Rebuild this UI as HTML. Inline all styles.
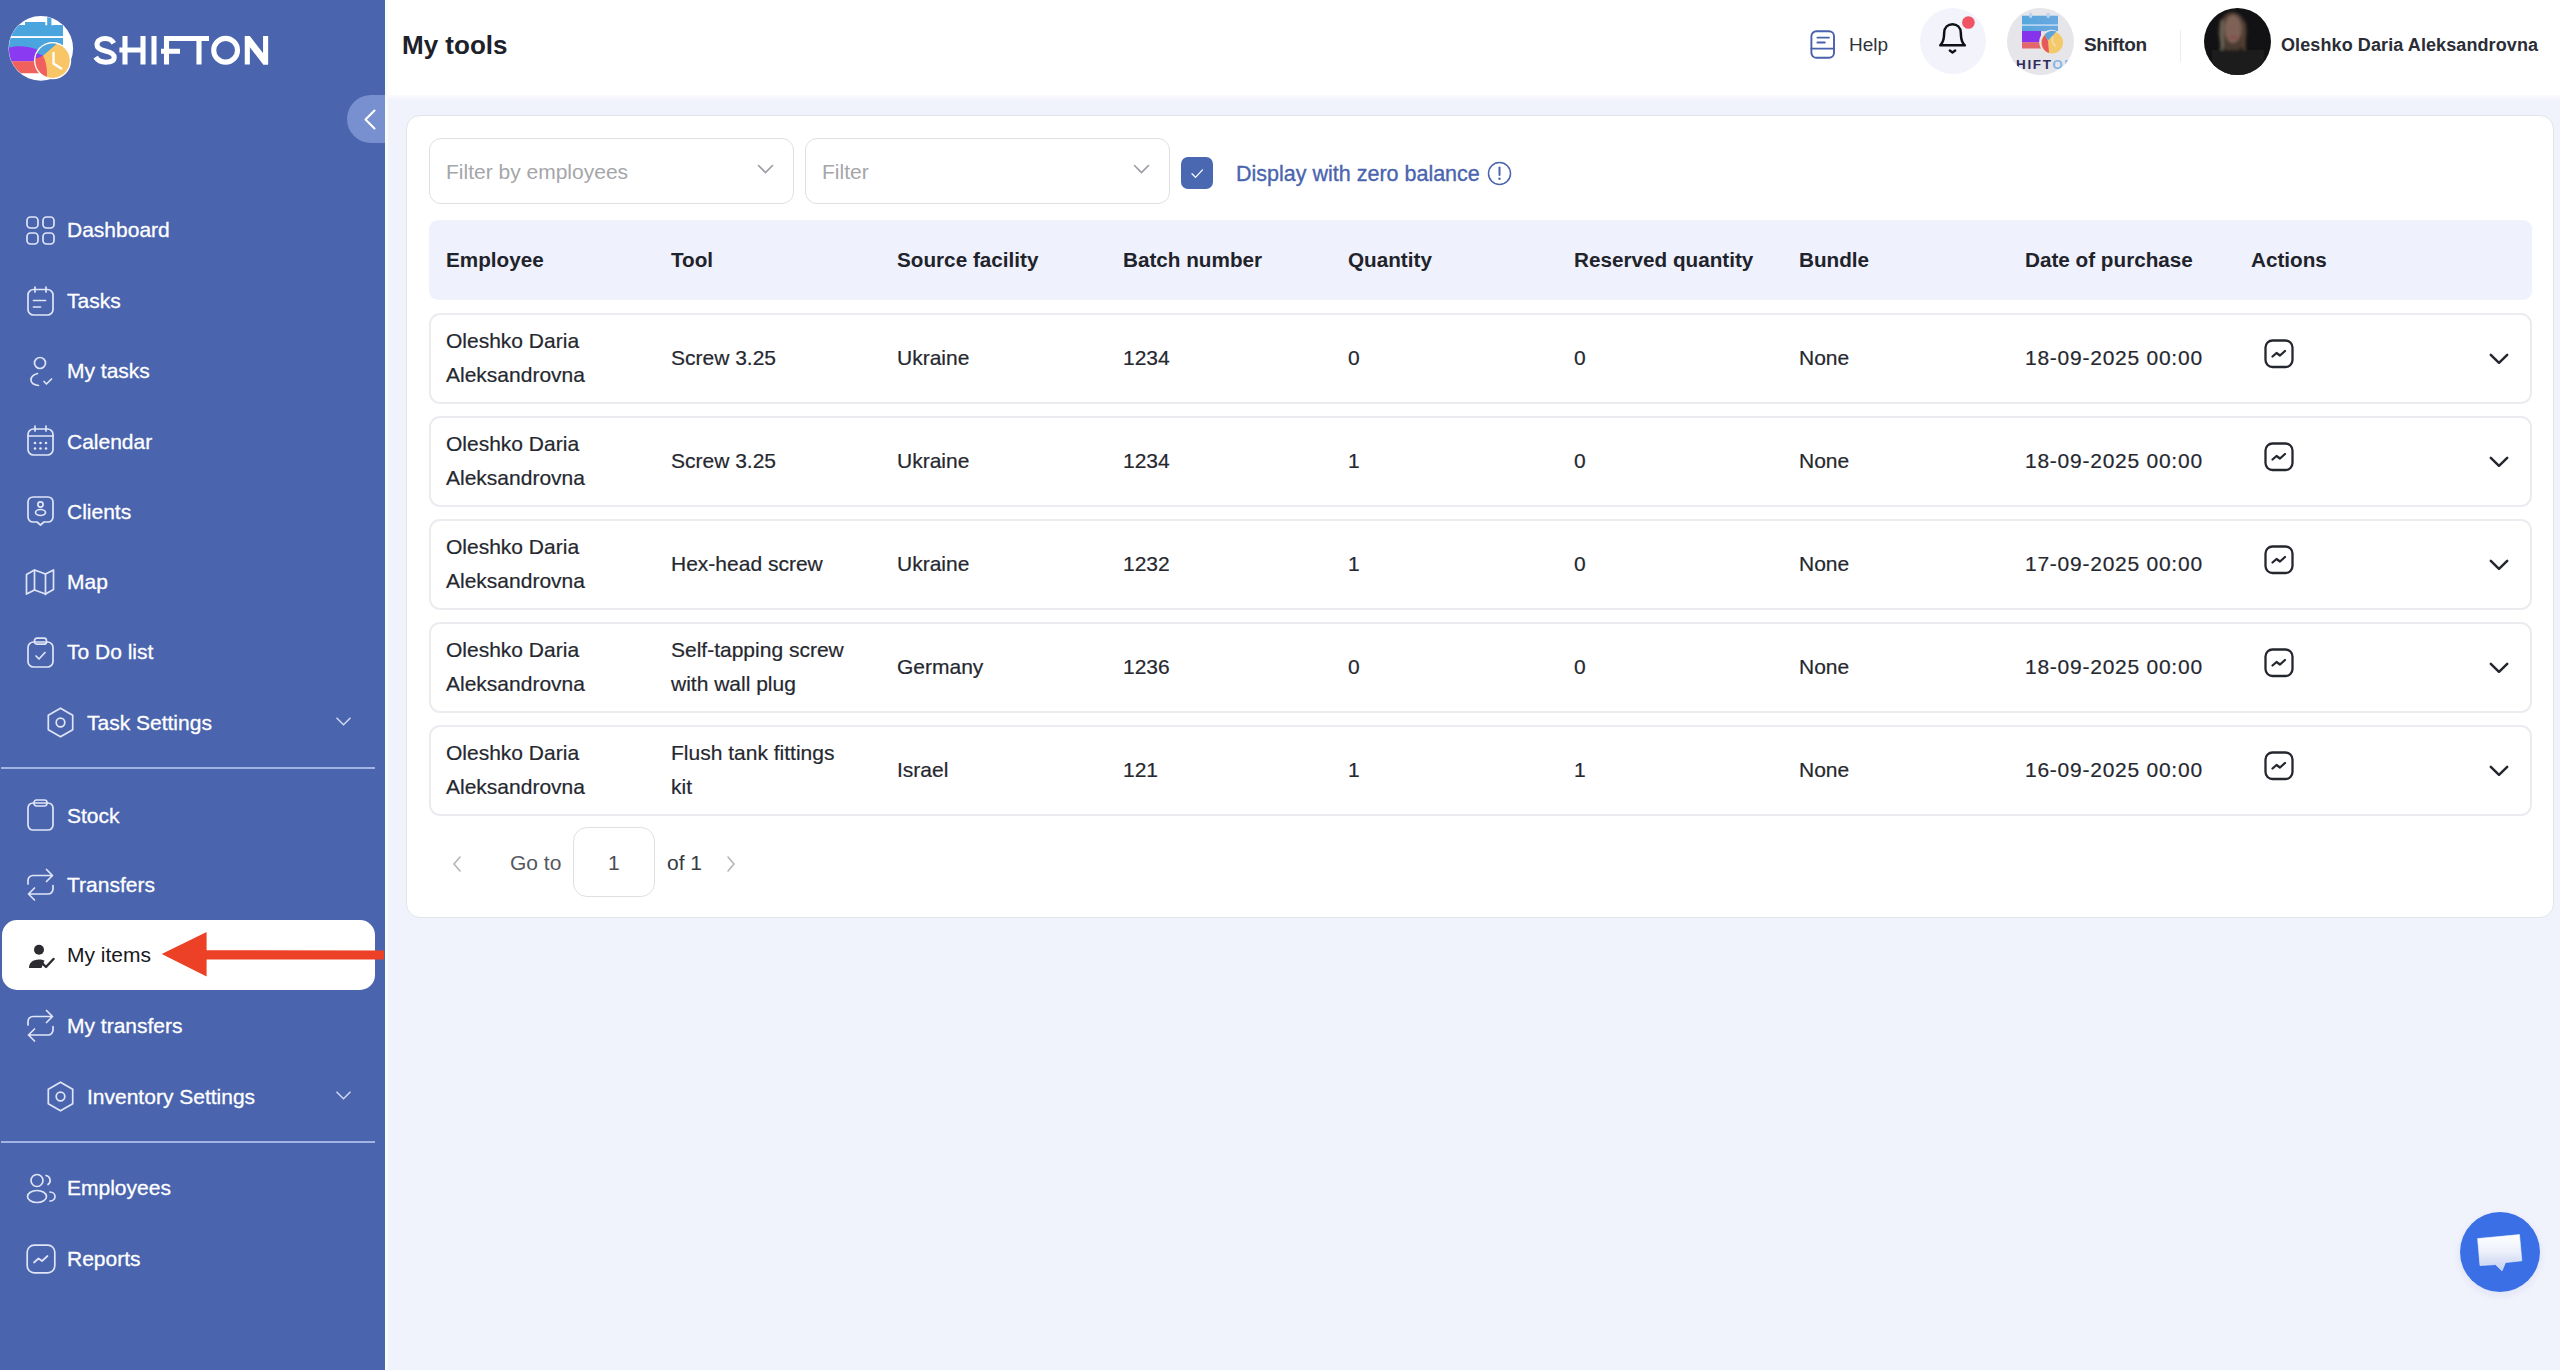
<!DOCTYPE html>
<html><head><meta charset="utf-8">
<style>
*{box-sizing:border-box;margin:0;padding:0}
html,body{width:2560px;height:1370px;overflow:hidden;background:#f0f2fc;font-family:"Liberation Sans",sans-serif;color:#24272e}
.abs{position:absolute}
.t{position:absolute;white-space:nowrap;line-height:1}
#side{position:absolute;left:0;top:0;width:385px;height:1370px;background:#4a64ae}
#hdr{position:absolute;left:385px;top:0;width:2175px;height:95px;background:#fff}
.nv{color:#fff;font-size:21px;-webkit-text-stroke:0.3px #fff}
.divl{position:absolute;left:1px;width:374px;height:2px;background:#a3b3e3}
#card{position:absolute;left:406px;top:115px;width:2148px;height:803px;background:#fff;border:1.5px solid #e3e4ea;border-radius:14px}
.sel{position:absolute;top:138px;width:365px;height:66px;border:1.5px solid #dfe0e4;border-radius:12px;background:#fff}
.ph{font-size:21px;color:#a5a6a9}
.thb{position:absolute;left:429px;top:220px;width:2103px;height:80px;background:#eff1fc;border-radius:9px}
.th{font-weight:bold;font-size:20.7px;color:#1f232b}
.row{position:absolute;left:429px;width:2103px;height:91px;border:2px solid #ebecf0;border-radius:11px;background:#fff}
.td{font-size:21px;color:#25282f;-webkit-text-stroke:0.2px #25282f}
</style></head><body>

<div id="side">
<svg class="abs" style="left:5px;top:12px" width="75" height="75" viewBox="0 0 75 75">
<defs><clipPath id="lc"><circle cx="35.8" cy="36.4" r="32"/></clipPath>
<clipPath id="cc"><circle cx="47.6" cy="48.7" r="17.2"/></clipPath></defs>
<circle cx="35.8" cy="36.4" r="32.3" fill="#fff"/>
<g clip-path="url(#lc)">
<path d="M0 13H20V10H40.3V13.3H42.2V5H46.4V13.3H48.3V13H58V40H0z" fill="#4aa4de"/>
<rect x="0" y="24.1" width="58" height="1.9" fill="#fff"/>
<path d="M0 37C8 33.5 22 33 34 38.5V49.5H0z" fill="#8a3bf1"/>
<path d="M0 49.3H34V61.3H0z" fill="#f0615e"/>
</g>
<circle cx="47.6" cy="48.7" r="18.6" fill="#fff"/>
<g clip-path="url(#cc)">
<rect x="28" y="30" width="40" height="40" fill="#f8c567"/>
<path d="M28 28H56L38 43.8L28 45z" fill="#4aa4de"/>
<path d="M28 41L38 43.8C41.5 50 42.5 58 41.6 67H28z" fill="#f0605f"/>
<path d="M28 39.5L33 41.5L38 43.8L31 46.5L28 46z" fill="#8a3bf1"/>
</g>
<path d="M48.5 40V51.5L57 57" stroke="#fff" stroke-width="2.3" fill="none"/>
</svg>
<svg class="abs" style="left:85px;top:25px" width="200" height="50" viewBox="85 25 200 50"><g stroke="#fff" stroke-width="5.1" fill="none" stroke-linecap="butt" stroke-linejoin="miter">
<path d="M113.8 43.2C112 40 108.8 38.5 105.2 38.5C100.2 38.5 97 41.2 97 44.8C97 48.8 100.6 50 105.4 51C110.4 52.1 114.2 53.8 114.2 57.6C114.2 61.2 110.6 62.2 105.6 62.2C101.4 62.2 97.8 60.6 95.6 57.2"/>
<path d="M125 36V64.5M143 36V64.5M119.4 50H143"/>
<path d="M154 36V64.5"/>
<path d="M166.5 64.5V38.5H209M161 51.2H180M199 38.5V64.5"/>
<circle cx="225.6" cy="50.25" r="11.9"/>
<path d="M247.3 64.5V36M265.6 64.5V36"/><path d="M245 36H249.8L268 59.6V64.5H263.2L245 40.9z" fill="#fff" stroke="none"/>
</g></svg>
<div class="abs" style="left:347px;top:95px;width:38px;height:48px;border-radius:24px 0 0 24px;background:#7890cf"></div>
<svg class="abs" style="left:362px;top:107px" width="16" height="24" viewBox="0 0 16 24" ><path d="M12.5 3.5L3.5 12.5l9 9" stroke="#fff" stroke-width="2.1" fill="none" stroke-linecap="round" stroke-linejoin="round"/></svg>
<svg class="abs" style="left:26px;top:216px" width="29" height="29" viewBox="0 0 29 29" ><g stroke="#dfe5f7" stroke-width="1.7" fill="none" stroke-linecap="round" stroke-linejoin="round"><rect x="1" y="1" width="11" height="11" rx="3.5"/><rect x="17" y="1" width="11" height="11" rx="3.5"/><rect x="1" y="17" width="11" height="11" rx="3.5"/><rect x="17" y="17" width="11" height="11" rx="3.5"/></g></svg>
<div class="t nv" style="left:67px;top:219px">Dashboard</div>
<svg class="abs" style="left:27px;top:286px" width="27" height="30" viewBox="0 0 27 30" ><g stroke="#dfe5f7" stroke-width="1.7" fill="none" stroke-linecap="round" stroke-linejoin="round"><rect x="1" y="3.5" width="25" height="25.5" rx="5.5"/><path d="M8 1v5M19 1v5M6.5 14.5h12M6.5 21h7"/></g></svg>
<div class="t nv" style="left:67px;top:290px">Tasks</div>
<svg class="abs" style="left:29px;top:356px" width="24" height="31" viewBox="0 0 24 31" ><g stroke="#dfe5f7" stroke-width="1.7" fill="none" stroke-linecap="round" stroke-linejoin="round"><circle cx="11" cy="7" r="5.5"/><path d="M8.5 17.5C4.5 18.5 2 21 2 24c0 3 3 5 7.5 5.5"/><path d="M15 25.5l2.5 2.5 5-5"/></g></svg>
<div class="t nv" style="left:67px;top:360px">My tasks</div>
<svg class="abs" style="left:27px;top:425px" width="27" height="31" viewBox="0 0 27 31" ><g stroke="#dfe5f7" stroke-width="1.7" fill="none" stroke-linecap="round" stroke-linejoin="round"><rect x="1" y="4" width="25" height="26" rx="5.5"/><path d="M1 11h25M8 1v5M19 1v5"/></g><g fill="#dfe5f7"><circle cx="8" cy="18" r="1.3"/><circle cx="13.5" cy="18" r="1.3"/><circle cx="19" cy="18" r="1.3"/><circle cx="8" cy="23.5" r="1.3"/><circle cx="13.5" cy="23.5" r="1.3"/><circle cx="19" cy="23.5" r="1.3"/></g></svg>
<div class="t nv" style="left:67px;top:431px">Calendar</div>
<svg class="abs" style="left:27px;top:496px" width="27" height="30" viewBox="0 0 27 30" ><g stroke="#dfe5f7" stroke-width="1.7" fill="none" stroke-linecap="round" stroke-linejoin="round"><path d="M6 1h15a5 5 0 0 1 5 5v15a5 5 0 0 1-5 5h-4l-3.5 3-3.5-3H6a5 5 0 0 1-5-5V6a5 5 0 0 1 5-5z"/><circle cx="13.5" cy="8.5" r="2.6"/><ellipse cx="13.5" cy="16.5" rx="5" ry="3"/></g></svg>
<div class="t nv" style="left:67px;top:501px">Clients</div>
<svg class="abs" style="left:25px;top:568px" width="30" height="28" viewBox="0 0 30 28" ><g stroke="#dfe5f7" stroke-width="1.7" fill="none" stroke-linecap="round" stroke-linejoin="round"><path d="M1.5 6.5l8-4.5 11 4 8-4v19.5l-8 4.5-11-4-8 4z"/><path d="M9.5 2v20M20.5 6v20.5"/></g></svg>
<div class="t nv" style="left:67px;top:571px">Map</div>
<svg class="abs" style="left:27px;top:637px" width="27" height="31" viewBox="0 0 27 31" ><g stroke="#dfe5f7" stroke-width="1.7" fill="none" stroke-linecap="round" stroke-linejoin="round"><rect x="1" y="5" width="25" height="25" rx="5.5"/><rect x="7.5" y="1.2" width="12" height="6" rx="2.5"/><path d="M9 19l3 3 6-6.5"/></g></svg>
<div class="t nv" style="left:67px;top:641px">To Do list</div>
<svg class="abs" style="left:27px;top:799px" width="27" height="32" viewBox="0 0 27 32" ><g stroke="#dfe5f7" stroke-width="1.7" fill="none" stroke-linecap="round" stroke-linejoin="round"><rect x="1" y="4" width="25" height="27" rx="5"/><rect x="7" y="1" width="13" height="6" rx="2.5"/></g></svg>
<div class="t nv" style="left:67px;top:805px">Stock</div>
<svg class="abs" style="left:26px;top:868px" width="29" height="34" viewBox="0 0 29 34" ><g stroke="#dfe5f7" stroke-width="1.7" fill="none" stroke-linecap="round" stroke-linejoin="round"><path d="M2 16V12.5a5 5 0 0 1 5-5h19.5M20.5 1.5l6 6-6 6M27 17.5v3.5a5 5 0 0 1-5 5H2.5M8.5 32l-6-6 6-6"/></g></svg>
<div class="t nv" style="left:67px;top:874px">Transfers</div>
<svg class="abs" style="left:26px;top:1009px" width="29" height="34" viewBox="0 0 29 34" ><g stroke="#dfe5f7" stroke-width="1.7" fill="none" stroke-linecap="round" stroke-linejoin="round"><path d="M2 16V12.5a5 5 0 0 1 5-5h19.5M20.5 1.5l6 6-6 6M27 17.5v3.5a5 5 0 0 1-5 5H2.5M8.5 32l-6-6 6-6"/></g></svg>
<div class="t nv" style="left:67px;top:1015px">My transfers</div>
<svg class="abs" style="left:26px;top:1173px" width="30" height="31" viewBox="0 0 30 31" ><g stroke="#dfe5f7" stroke-width="1.7" fill="none" stroke-linecap="round" stroke-linejoin="round"><circle cx="11" cy="7.5" r="6"/><ellipse cx="11" cy="23.5" rx="9.5" ry="6"/><path d="M20 2.5a5 5 0 0 1 2 9M24 19a5 4.5 0 0 1 0 9"/></g></svg>
<div class="t nv" style="left:67px;top:1177px">Employees</div>
<svg class="abs" style="left:26px;top:1244px" width="30" height="30" viewBox="0 0 30 30" ><g stroke="#dfe5f7" stroke-width="1.7" fill="none" stroke-linecap="round" stroke-linejoin="round"><rect x="1.2" y="1.2" width="27.6" height="27.6" rx="7"/><path d="M8 18.5l4.5-4 3.5 2.5 5.5-5"/></g></svg>
<div class="t nv" style="left:67px;top:1248px">Reports</div>
<svg class="abs" style="left:46px;top:707px" width="29" height="31" viewBox="0 0 29 31" ><g stroke="#dfe5f7" stroke-width="1.7" fill="none" stroke-linecap="round" stroke-linejoin="round"><path d="M14.5 1.2l12.2 7v14.6l-12.2 7-12.2-7V8.2z"/><circle cx="14.5" cy="15.5" r="4.3"/></g></svg>
<div class="t nv" style="left:87px;top:712px">Task Settings</div>
<svg class="abs" style="left:336px;top:717px" width="15" height="9" viewBox="0 0 15 9" ><path d="M1 1.2l6.5 6.5 6.5-6.5" stroke="#cfd8f2" stroke-width="1.6" fill="none" stroke-linecap="round"/></svg>
<svg class="abs" style="left:46px;top:1081px" width="29" height="31" viewBox="0 0 29 31" ><g stroke="#dfe5f7" stroke-width="1.7" fill="none" stroke-linecap="round" stroke-linejoin="round"><path d="M14.5 1.2l12.2 7v14.6l-12.2 7-12.2-7V8.2z"/><circle cx="14.5" cy="15.5" r="4.3"/></g></svg>
<div class="t nv" style="left:87px;top:1086px">Inventory Settings</div>
<svg class="abs" style="left:336px;top:1091px" width="15" height="9" viewBox="0 0 15 9" ><path d="M1 1.2l6.5 6.5 6.5-6.5" stroke="#cfd8f2" stroke-width="1.6" fill="none" stroke-linecap="round"/></svg>
<div class="divl" style="top:767px"></div>
<div class="divl" style="top:1141px"></div>
<div class="abs" style="left:2px;top:920px;width:373px;height:70px;border-radius:15px;background:#fff"></div>
<svg class="abs" style="left:27px;top:944px" width="28" height="25" viewBox="0 0 28 25" ><circle cx="12" cy="5.8" r="5" fill="#2b2b30"/><path d="M2 24c0-5 3.5-8.5 10-8.5 2.2 0 4 .4 5.5 1.1L14.5 24z" fill="#2b2b30"/><path d="M15.5 19.5l3.5 3.5 7.5-8" stroke="#2b2b30" stroke-width="2.4" fill="none" stroke-linecap="round" stroke-linejoin="round"/></svg>
<div class="t" style="left:67px;top:944px;font-size:21px;color:#16181d">My items</div>
</div>
<svg class="abs" style="left:160px;top:930px" width="230" height="50" viewBox="0 0 230 50"><path d="M1.7 24L46.6 2v18.2L224 20.6v8.8L46.6 29.4V46.5z" fill="#ec4126"/></svg>
<div id="hdr"></div>
<div class="abs" style="left:385px;top:95px;width:2175px;height:6px;background:linear-gradient(#fbfbfe,#f0f2fc)"></div>
<div class="abs" style="left:385px;top:0;width:2.5px;height:1370px;background:#f9fcff"></div>
<div class="t" style="left:402px;top:32px;font-size:26px;font-weight:bold;color:#1d212a">My tools</div>
<svg class="abs" style="left:1809px;top:29px" width="28" height="31" viewBox="0 0 28 31" ><g stroke="#4a60ab" stroke-width="1.9" fill="none" stroke-linecap="round"><rect x="2.4" y="2.3" width="22.6" height="26.5" rx="5"/><path d="M2.4 19.6h22.6M8.4 8.6h11.6M8.4 13.5h7.4"/></g></svg>
<div class="t" style="left:1849px;top:35px;font-size:19px;color:#30333a">Help</div>
<svg class="abs" style="left:1915px;top:5px" width="75" height="75" viewBox="0 0 75 75">
<circle cx="38" cy="36" r="33" fill="#f2f3fb"/>
<path d="M25.2 40.3c2.6-2.6 3.6-5.5 3.8-9.5l.2-3.3c.3-5.3 3.8-8.3 8.3-8.3s8 3 8.3 8.3l.2 3.3c.2 4 1.2 6.9 3.8 9.5z" stroke="#101114" stroke-width="2.5" fill="none" stroke-linejoin="round"/>
<path d="M34.8 45.6l2.7 1.9 2.7-1.9" stroke="#101114" stroke-width="2.4" fill="none" stroke-linecap="round" stroke-linejoin="round"/>
<circle cx="53.4" cy="17.5" r="6.3" fill="#ef5364"/>
</svg>
<svg class="abs" style="left:2007px;top:8px" width="67" height="67" viewBox="0 0 67 67">
<defs><clipPath id="ac"><circle cx="33.5" cy="33.5" r="33.5"/></clipPath>
<linearGradient id="bg1" x1="0" y1="0" x2="1" y2="0"><stop offset="0" stop-color="#56a6dc"/><stop offset="1" stop-color="#6aa8e0"/></linearGradient></defs>
<circle cx="33.5" cy="33.5" r="33.5" fill="#e6e6ea"/>
<g clip-path="url(#ac)">
<rect x="15" y="7.7" width="36" height="15.5" fill="url(#bg1)"/>
<rect x="15" y="16.3" width="36" height="1.6" fill="#bcd8f3"/>
<rect x="22.2" y="4.6" width="3" height="5.5" rx="1.5" fill="#b9d3f0"/>
<rect x="39.7" y="4.6" width="3" height="5.5" rx="1.5" fill="#b9d3f0"/>
<rect x="15" y="23" width="19" height="11.5" fill="#8634ec"/>
<rect x="15" y="34.3" width="19" height="6.2" fill="#e2666c"/>
<circle cx="44.5" cy="34" r="12.3" fill="#e6e6ea"/>
<circle cx="45" cy="34.5" r="11" fill="#f3c96a"/>
<path d="M35 37a11 11 0 0 1 3-10l3 6 1 12a11 11 0 0 1-7-8z" fill="#e4585e"/>
<path d="M37.5 27a11 11 0 0 1 12-3.5l-8.5 9z" fill="#5ea4dc"/>
<path d="M45.5 28.5v6l3 4" stroke="#f7dcb8" stroke-width="1.3" fill="none"/>
<text x="-1.5" y="60.8" font-family="Liberation Sans" font-weight="bold" font-size="13.5" fill="#2d2c5c" letter-spacing="1.6">SHIFT<tspan fill="#86b6e8">ON</tspan></text>
</g></svg>
<div class="t" style="left:2084px;top:35px;font-size:19px;font-weight:bold;color:#2a2d35;letter-spacing:-0.4px">Shifton</div>
<div class="abs" style="left:2180px;top:30px;width:1px;height:32px;background:#ebebf0"></div>
<svg class="abs" style="left:2204px;top:8px" width="67" height="67" viewBox="0 0 67 67">
<defs><clipPath id="uc"><circle cx="33.5" cy="33.5" r="33.5"/></clipPath>
<filter id="bl" x="-20%" y="-20%" width="140%" height="140%"><feGaussianBlur stdDeviation="1.8"/></filter></defs>
<circle cx="33.5" cy="33.5" r="33.5" fill="#121214"/>
<g clip-path="url(#uc)" filter="url(#bl)">
<ellipse cx="28.5" cy="24" rx="14" ry="20" fill="#4c3a30"/>
<ellipse cx="29" cy="21" rx="8.5" ry="14" fill="#7e6256"/>
<rect x="16.5" y="12" width="3" height="30" fill="#6e6a5a"/>
<rect x="38.5" y="14" width="3" height="28" fill="#5a4232"/>
<ellipse cx="30" cy="29" rx="4" ry="1.6" fill="#8a4a48"/>
<rect x="8" y="42" width="52" height="30" fill="#1a1a1f"/>
</g></svg>
<div class="t" style="left:2281px;top:36px;font-size:18px;font-weight:bold;color:#2a2d35;letter-spacing:0.1px">Oleshko Daria Aleksandrovna</div>
<div id="card"></div>
<div class="sel" style="left:429px"></div>
<div class="t ph" style="left:446px;top:161px">Filter by employees</div>
<svg class="abs" style="left:757px;top:164px" width="17" height="11" viewBox="0 0 17 11" ><path d="M1.5 1.5l7 7 7-7" stroke="#9a9ca3" stroke-width="1.6" fill="none" stroke-linecap="round"/></svg>
<div class="sel" style="left:805px"></div>
<div class="t ph" style="left:822px;top:161px">Filter</div>
<svg class="abs" style="left:1133px;top:164px" width="17" height="11" viewBox="0 0 17 11" ><path d="M1.5 1.5l7 7 7-7" stroke="#9a9ca3" stroke-width="1.6" fill="none" stroke-linecap="round"/></svg>
<div class="abs" style="left:1181px;top:157px;width:32px;height:32px;border-radius:7px;background:#4a67b2"></div>
<svg class="abs" style="left:1189px;top:167px" width="16" height="12" viewBox="0 0 16 12" ><path d="M3 6.8l3.5 3.6 7-7.5" stroke="#fff" stroke-width="1.3" fill="none" stroke-linecap="round" stroke-linejoin="round"/></svg>
<div class="t" style="left:1236px;top:164px;font-size:21.5px;color:#4a64ae;-webkit-text-stroke:0.35px #4a64ae">Display with zero balance</div>
<svg class="abs" style="left:1487px;top:161px" width="25" height="25" viewBox="0 0 25 25" ><circle cx="12.5" cy="12.5" r="11" stroke="#4a64ae" stroke-width="1.5" fill="none"/><path d="M12.5 6.5v7.5" stroke="#4a64ae" stroke-width="2" stroke-linecap="round"/><circle cx="12.5" cy="17.8" r="1.2" fill="#4a64ae"/></svg>
<div class="thb"></div>
<div class="t th" style="left:446px;top:250px">Employee</div>
<div class="t th" style="left:671px;top:250px">Tool</div>
<div class="t th" style="left:897px;top:250px">Source facility</div>
<div class="t th" style="left:1123px;top:250px">Batch number</div>
<div class="t th" style="left:1348px;top:250px">Quantity</div>
<div class="t th" style="left:1574px;top:250px">Reserved quantity</div>
<div class="t th" style="left:1799px;top:250px">Bundle</div>
<div class="t th" style="left:2025px;top:250px">Date of purchase</div>
<div class="t th" style="left:2251px;top:250px">Actions</div>
<div class="row" style="top:313px"></div>
<div class="t td" style="left:446px;top:330px">Oleshko Daria</div>
<div class="t td" style="left:446px;top:364px">Aleksandrovna</div>
<div class="t td" style="left:671px;top:347px">Screw 3.25</div>
<div class="t td" style="left:897px;top:347px">Ukraine</div>
<div class="t td" style="left:1123px;top:347px">1234</div>
<div class="t td" style="left:1348px;top:347px">0</div>
<div class="t td" style="left:1574px;top:347px">0</div>
<div class="t td" style="left:1799px;top:347px">None</div>
<div class="t td" style="left:2025px;top:347px;letter-spacing:0.75px">18-09-2025 00:00</div>
<svg class="abs" style="left:2264px;top:339px" width="31" height="30" viewBox="0 0 31 30" ><g stroke="#24272e" stroke-width="2.3" fill="none" stroke-linecap="round" stroke-linejoin="round"><rect x="1.5" y="1.5" width="27" height="26.5" rx="7"/><path d="M8.5 17.5l4-3.5 3.5 2.5 5-4.5"/></g></svg>
<svg class="abs" style="left:2487px;top:351px" width="24" height="16" viewBox="0 0 24 16" ><path d="M3.8 3.8l8.2 8 8.2-8" stroke="#24272e" stroke-width="2.5" fill="none" stroke-linecap="round" stroke-linejoin="round"/></svg>
<div class="row" style="top:416px"></div>
<div class="t td" style="left:446px;top:433px">Oleshko Daria</div>
<div class="t td" style="left:446px;top:467px">Aleksandrovna</div>
<div class="t td" style="left:671px;top:450px">Screw 3.25</div>
<div class="t td" style="left:897px;top:450px">Ukraine</div>
<div class="t td" style="left:1123px;top:450px">1234</div>
<div class="t td" style="left:1348px;top:450px">1</div>
<div class="t td" style="left:1574px;top:450px">0</div>
<div class="t td" style="left:1799px;top:450px">None</div>
<div class="t td" style="left:2025px;top:450px;letter-spacing:0.75px">18-09-2025 00:00</div>
<svg class="abs" style="left:2264px;top:442px" width="31" height="30" viewBox="0 0 31 30" ><g stroke="#24272e" stroke-width="2.3" fill="none" stroke-linecap="round" stroke-linejoin="round"><rect x="1.5" y="1.5" width="27" height="26.5" rx="7"/><path d="M8.5 17.5l4-3.5 3.5 2.5 5-4.5"/></g></svg>
<svg class="abs" style="left:2487px;top:454px" width="24" height="16" viewBox="0 0 24 16" ><path d="M3.8 3.8l8.2 8 8.2-8" stroke="#24272e" stroke-width="2.5" fill="none" stroke-linecap="round" stroke-linejoin="round"/></svg>
<div class="row" style="top:519px"></div>
<div class="t td" style="left:446px;top:536px">Oleshko Daria</div>
<div class="t td" style="left:446px;top:570px">Aleksandrovna</div>
<div class="t td" style="left:671px;top:553px">Hex-head screw</div>
<div class="t td" style="left:897px;top:553px">Ukraine</div>
<div class="t td" style="left:1123px;top:553px">1232</div>
<div class="t td" style="left:1348px;top:553px">1</div>
<div class="t td" style="left:1574px;top:553px">0</div>
<div class="t td" style="left:1799px;top:553px">None</div>
<div class="t td" style="left:2025px;top:553px;letter-spacing:0.75px">17-09-2025 00:00</div>
<svg class="abs" style="left:2264px;top:545px" width="31" height="30" viewBox="0 0 31 30" ><g stroke="#24272e" stroke-width="2.3" fill="none" stroke-linecap="round" stroke-linejoin="round"><rect x="1.5" y="1.5" width="27" height="26.5" rx="7"/><path d="M8.5 17.5l4-3.5 3.5 2.5 5-4.5"/></g></svg>
<svg class="abs" style="left:2487px;top:557px" width="24" height="16" viewBox="0 0 24 16" ><path d="M3.8 3.8l8.2 8 8.2-8" stroke="#24272e" stroke-width="2.5" fill="none" stroke-linecap="round" stroke-linejoin="round"/></svg>
<div class="row" style="top:622px"></div>
<div class="t td" style="left:446px;top:639px">Oleshko Daria</div>
<div class="t td" style="left:446px;top:673px">Aleksandrovna</div>
<div class="t td" style="left:671px;top:639px">Self-tapping screw</div>
<div class="t td" style="left:671px;top:673px">with wall plug</div>
<div class="t td" style="left:897px;top:656px">Germany</div>
<div class="t td" style="left:1123px;top:656px">1236</div>
<div class="t td" style="left:1348px;top:656px">0</div>
<div class="t td" style="left:1574px;top:656px">0</div>
<div class="t td" style="left:1799px;top:656px">None</div>
<div class="t td" style="left:2025px;top:656px;letter-spacing:0.75px">18-09-2025 00:00</div>
<svg class="abs" style="left:2264px;top:648px" width="31" height="30" viewBox="0 0 31 30" ><g stroke="#24272e" stroke-width="2.3" fill="none" stroke-linecap="round" stroke-linejoin="round"><rect x="1.5" y="1.5" width="27" height="26.5" rx="7"/><path d="M8.5 17.5l4-3.5 3.5 2.5 5-4.5"/></g></svg>
<svg class="abs" style="left:2487px;top:660px" width="24" height="16" viewBox="0 0 24 16" ><path d="M3.8 3.8l8.2 8 8.2-8" stroke="#24272e" stroke-width="2.5" fill="none" stroke-linecap="round" stroke-linejoin="round"/></svg>
<div class="row" style="top:725px"></div>
<div class="t td" style="left:446px;top:742px">Oleshko Daria</div>
<div class="t td" style="left:446px;top:776px">Aleksandrovna</div>
<div class="t td" style="left:671px;top:742px">Flush tank fittings</div>
<div class="t td" style="left:671px;top:776px">kit</div>
<div class="t td" style="left:897px;top:759px">Israel</div>
<div class="t td" style="left:1123px;top:759px">121</div>
<div class="t td" style="left:1348px;top:759px">1</div>
<div class="t td" style="left:1574px;top:759px">1</div>
<div class="t td" style="left:1799px;top:759px">None</div>
<div class="t td" style="left:2025px;top:759px;letter-spacing:0.75px">16-09-2025 00:00</div>
<svg class="abs" style="left:2264px;top:751px" width="31" height="30" viewBox="0 0 31 30" ><g stroke="#24272e" stroke-width="2.3" fill="none" stroke-linecap="round" stroke-linejoin="round"><rect x="1.5" y="1.5" width="27" height="26.5" rx="7"/><path d="M8.5 17.5l4-3.5 3.5 2.5 5-4.5"/></g></svg>
<svg class="abs" style="left:2487px;top:763px" width="24" height="16" viewBox="0 0 24 16" ><path d="M3.8 3.8l8.2 8 8.2-8" stroke="#24272e" stroke-width="2.5" fill="none" stroke-linecap="round" stroke-linejoin="round"/></svg>
<svg class="abs" style="left:450px;top:854px" width="14" height="20" viewBox="0 0 14 20" ><path d="M10 3L4 10l6 7" stroke="#b3b5bb" stroke-width="1.6" fill="none" stroke-linecap="round"/></svg>
<div class="t" style="left:510px;top:852px;font-size:21px;color:#55585f">Go to</div>
<div class="abs" style="left:573px;top:827px;width:82px;height:70px;border:1.5px solid #dfe0e4;border-radius:14px;background:#fff"></div>
<div class="t" style="left:608px;top:852px;font-size:21px;color:#4a4d54">1</div>
<div class="t" style="left:667px;top:852px;font-size:21px;color:#35383f">of 1</div>
<svg class="abs" style="left:724px;top:854px" width="14" height="20" viewBox="0 0 14 20" ><path d="M4 3l6 7-6 7" stroke="#b3b5bb" stroke-width="1.6" fill="none" stroke-linecap="round"/></svg>
<div class="abs" style="left:2460px;top:1212px;width:80px;height:80px;border-radius:50%;background:#3b6fe6;box-shadow:0 3px 8px rgba(40,60,140,0.08)"></div>
<svg class="abs" style="left:2440px;top:1195px" width="120" height="120" viewBox="0 0 120 120">
<defs><linearGradient id="cg" x1="0" y1="0" x2="0" y2="1"><stop offset="0" stop-color="#ffffff"/><stop offset="0.45" stop-color="#eef1fb"/><stop offset="1" stop-color="#c3cff0"/></linearGradient></defs>
<path d="M37.6 43.6L79.5 39.6L81.8 65.8L65.5 67.6L62 75.8L55.5 69.6L40 70.5z" fill="url(#cg)" stroke="#f4f6fd" stroke-width="0.6" stroke-linejoin="round"/>
</svg>
</body></html>
